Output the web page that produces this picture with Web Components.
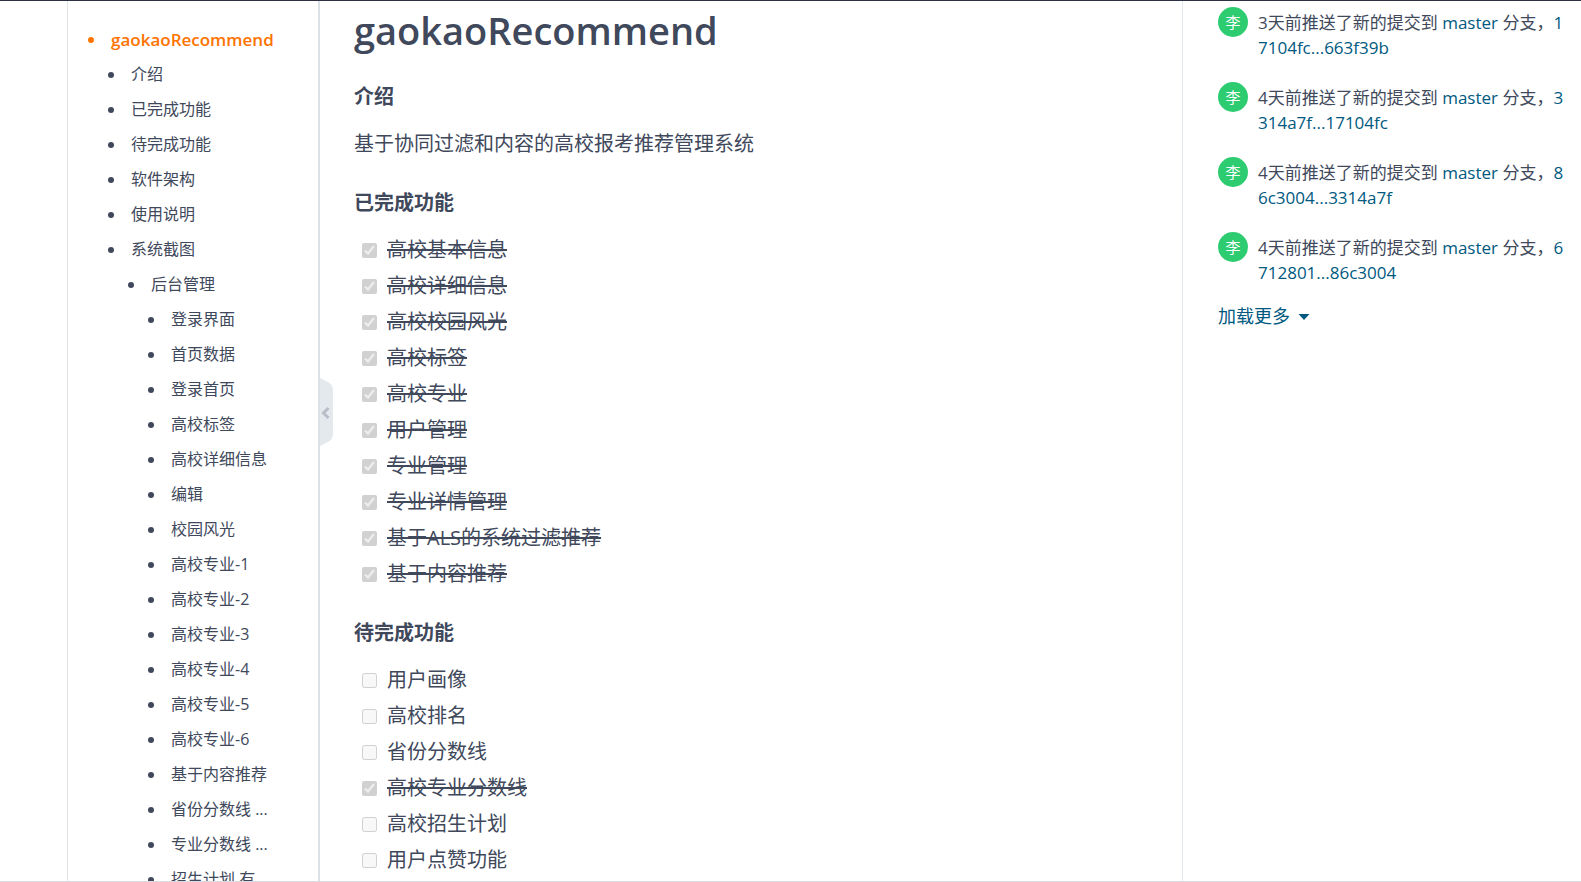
<!DOCTYPE html>
<html lang="zh-CN">
<head>
<meta charset="utf-8">
<meta name="viewport" content="width=device-width, initial-scale=1">
<title>gaokaoRecommend</title>
<style>
    body {
        margin: 0;
        color: #40485b;
        background: #fff;
        font-family: "Open Sans", "Noto Sans CJK SC", sans-serif;
        --link: #005980;
        --active: #fe7300;
        --line: #e3e9ed;
    }
</style>
</head>
<body>
<repo-page>
    <readme-toc slot="toc"></readme-toc>
    <readme-content slot="readme" heading="gaokaoRecommend">
        <readme-section heading="介绍">
            <readme-text>基于协同过滤和内容的高校报考推荐管理系统</readme-text>
        </readme-section>
        <readme-section heading="已完成功能">
            <task-item done>高校基本信息</task-item>
            <task-item done>高校详细信息</task-item>
            <task-item done>高校校园风光</task-item>
            <task-item done>高校标签</task-item>
            <task-item done>高校专业</task-item>
            <task-item done>用户管理</task-item>
            <task-item done>专业管理</task-item>
            <task-item done>专业详情管理</task-item>
            <task-item done>基于ALS的系统过滤推荐</task-item>
            <task-item done>基于内容推荐</task-item>
        </readme-section>
        <readme-section heading="待完成功能">
            <task-item>用户画像</task-item>
            <task-item>高校排名</task-item>
            <task-item>省份分数线</task-item>
            <task-item done>高校专业分数线</task-item>
            <task-item>高校招生计划</task-item>
            <task-item>用户点赞功能</task-item>
        </readme-section>
    </readme-content>
    <activity-feed slot="activity">
        <push-event user="李" when="3天前" branch="master" range="17104fc...663f39b"></push-event>
        <push-event user="李" when="4天前" branch="master" range="3314a7f...17104fc"></push-event>
        <push-event user="李" when="4天前" branch="master" range="86c3004...3314a7f"></push-event>
        <push-event user="李" when="4天前" branch="master" range="6712801...86c3004"></push-event>
    </activity-feed>
</repo-page>

<script>
class BaseElement extends HTMLElement {
    constructor() {
        super();
        this.attachShadow({ mode: 'open' });
    }

    connectedCallback() {
        const template = document.createElement('template');
        template.innerHTML = `<style>${this.constructor.style}</style>${this.html}`;
        this.shadowRoot.innerHTML = '';
        this.shadowRoot.appendChild(template.content.cloneNode(true));
    }

    attr(name) {
        return this.getAttribute(name) || '';
    }
}

class RepoPage extends BaseElement {
    get html() {
        return `
            <slot name="toc"></slot>
            <slot name="readme"></slot>
            <slot name="activity"></slot>
        `;
    }

    static get style() {
        return `
            :host {
                display: grid;
                grid-template-columns: 253px minmax(0, 1fr) 399px;
                grid-template-rows: minmax(0, 1fr);
                box-sizing: border-box;
                height: 100vh;
                padding-left: 67px;
                overflow: hidden;
                border-top: 1px solid #2d3040;
                border-bottom: 1px solid #d9dbde;
            }
        `;
    }
}

class ReadmeToc extends BaseElement {
    static get items() {
        const pages = [
            '登录界面', '首页数据', '登录首页', '高校标签', '高校详细信息', '编辑', '校园风光',
            '高校专业-1', '高校专业-2', '高校专业-3', '高校专业-4', '高校专业-5', '高校专业-6',
            '基于内容推荐', '省份分数线 ...', '专业分数线 ...', '招生计划 有',
        ];
        return [{
            text: 'gaokaoRecommend',
            active: true,
            children: [
                { text: '介绍' },
                { text: '已完成功能' },
                { text: '待完成功能' },
                { text: '软件架构' },
                { text: '使用说明' },
                {
                    text: '系统截图',
                    children: [{ text: '后台管理', children: pages.map(text => ({ text })) }],
                },
            ],
        }];
    }

    list(items) {
        const rows = items.map(item => `
            <li>
                <a href="#"${item.active ? ' class="active"' : ''}>${item.text}</a>
                ${item.children ? this.list(item.children) : ''}
            </li>
        `);
        return `<ul>${rows.join('')}</ul>`;
    }

    get html() {
        return `
            <nav>${this.list(ReadmeToc.items)}</nav>
            <button type="button" aria-label="收起">
                <svg width="13" height="68" viewBox="0 0 13 68">
                    <path d="M0 0 L8 4 Q13 7 13 12 V56 Q13 61 8 64 L0 68 Z" fill="#e3e9ed"/>
                    <path d="M8.5 30 L3.5 35 L8.5 40" fill="none" stroke="#b9bdc9" stroke-width="3"/>
                </svg>
            </button>
        `;
    }

    static get style() {
        return `
            :host {
                display: block;
                position: relative;
                border-left: 1px solid #e3e4e6;
                border-right: 2px solid #dce3e8;
            }
            nav {
                height: 100%;
                box-sizing: border-box;
                padding: 21px 0 0 20px;
                overflow: hidden;
            }
            ul {
                margin: 0;
                padding: 0;
                list-style: none;
            }
            ul ul {
                padding-left: 20px;
            }
            a {
                display: flex;
                align-items: center;
                gap: 17px;
                color: inherit;
                font-size: 16px;
                line-height: 35px;
                white-space: nowrap;
                text-decoration: none;
            }
            a::before {
                content: '';
                width: 6px;
                height: 6px;
                border-radius: 50%;
                background: currentColor;
            }
            .active {
                color: var(--active);
                font-size: 17px;
                font-weight: 600;
            }
            button {
                position: absolute;
                top: calc(50% - 63px);
                left: 100%;
                margin-left: 2px;
                padding: 0;
                border: 0;
                background: none;
                cursor: pointer;
            }
            svg {
                display: block;
            }
        `;
    }
}

class ReadmeContent extends BaseElement {
    get html() {
        return `<h1>${this.attr('heading')}</h1><slot></slot>`;
    }

    static get style() {
        return `
            :host {
                display: flex;
                flex-direction: column;
                gap: 29px;
                padding: 0 34px;
                overflow: hidden;
            }
            h1 {
                margin: 0 0 -6px;
                font-size: 38px;
                font-weight: 600;
                line-height: 58px;
            }
        `;
    }
}

class ReadmeSection extends BaseElement {
    get html() {
        return `<h3>${this.attr('heading')}</h3><div><slot></slot></div>`;
    }

    static get style() {
        return `
            h3 {
                margin: 0;
                font-size: 20px;
                font-weight: 700;
                line-height: 30px;
            }
            :host, div {
                display: flex;
                flex-direction: column;
            }
            :host {
                gap: 17px;
            }
            div {
                gap: 6px;
            }
        `;
    }
}

class ReadmeText extends BaseElement {
    get html() {
        return '<p><slot></slot></p>';
    }

    static get style() {
        return `
            :host {
                display: block;
            }
            p {
                margin: 0;
                font-size: 20px;
                line-height: 30px;
            }
        `;
    }
}

class TaskItem extends BaseElement {
    get html() {
        const done = this.hasAttribute('done');
        return `
            <label>
                <input type="checkbox" disabled${done ? ' checked' : ''}>
                <span${done ? ' class="done"' : ''}><slot></slot></span>
            </label>
        `;
    }

    static get style() {
        return `
            :host {
                display: block;
            }
            label {
                display: flex;
                align-items: center;
                gap: 10px;
                padding-left: 8px;
                font-size: 20px;
                line-height: 30px;
            }
            input {
                width: 15px;
                height: 15px;
                margin: 0;
            }
            .done {
                text-decoration: line-through;
                text-decoration-thickness: 2px;
            }
        `;
    }
}

class ActivityFeed extends BaseElement {
    get html() {
        return `
            <slot></slot>
            <a href="#">加载更多
                <svg width="12" height="6" viewBox="0 0 12 6"><path d="M0.5 0 H11.5 L6 6 Z" fill="currentColor"/></svg>
            </a>
        `;
    }

    static get style() {
        return `
            :host {
                display: flex;
                flex-direction: column;
                align-items: flex-start;
                gap: 22px;
                padding: 6px 14px 0 35px;
                border-left: 1px solid var(--line);
            }
            a {
                display: flex;
                align-items: center;
                gap: 8px;
                margin-top: -3px;
                color: var(--link);
                font-size: 18px;
                line-height: 25px;
                text-decoration: none;
            }
        `;
    }
}

class PushEvent extends BaseElement {
    get html() {
        return `
            <span class="avatar">${this.attr('user')}</span>
            <p>${this.attr('when')}推送了新的提交到 <a href="#">${this.attr('branch')}</a> 分支，<a href="#">${this.attr('range')}</a></p>
        `;
    }

    static get style() {
        return `
            :host {
                display: flex;
                gap: 10px;
            }
            .avatar {
                flex: none;
                width: 30px;
                height: 30px;
                border-radius: 50%;
                color: #fff;
                background: #2ecc71;
                font-size: 15px;
                line-height: 30px;
                text-align: center;
            }
            p {
                margin: 0;
                padding-top: 3px;
                font-size: 17px;
                line-height: 25px;
                word-break: break-all;
            }
            a {
                color: var(--link);
                text-decoration: none;
            }
        `;
    }
}

customElements.define('repo-page', RepoPage);
customElements.define('readme-toc', ReadmeToc);
customElements.define('readme-content', ReadmeContent);
customElements.define('readme-section', ReadmeSection);
customElements.define('readme-text', ReadmeText);
customElements.define('task-item', TaskItem);
customElements.define('activity-feed', ActivityFeed);
customElements.define('push-event', PushEvent);
</script>
</body>
</html>
